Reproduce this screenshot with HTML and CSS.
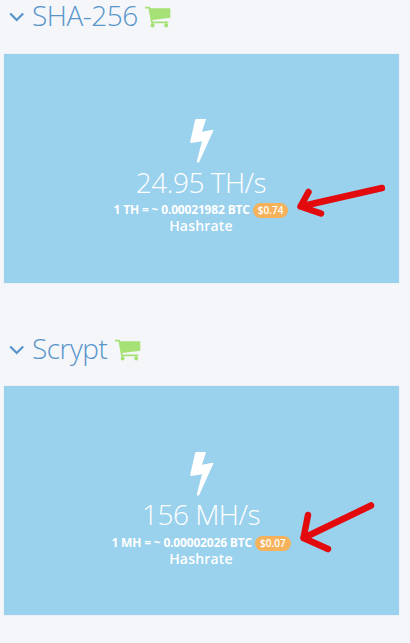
FILE: index.html
```html
<!DOCTYPE html>
<html lang="en">
<head>
<meta charset="utf-8">
<title>Hashrate</title>
<link rel="stylesheet" href="styles.css">
</head>
<body>
<svg class="defs" aria-hidden="true">
  <symbol id="chevron" viewBox="0 0 16 10"><path d="M1.200 1.500 7.700 8l6.500-6.500" fill="none" stroke="currentColor" stroke-width="2.200"/></symbol>
  <symbol id="cart" viewBox="0 0 26 22"><path d="M0 .8h4.700L5.300 2.300H25.300v9.500L7.300 14l.3 1.600H23.300v1.700H6.200L3.500 2.500H0z" fill="currentColor"/><circle cx="7.600" cy="19.500" r="2" fill="currentColor"/><circle cx="21.200" cy="19.500" r="2" fill="currentColor"/><path d="M7.600 16v3M21.200 16v3" stroke="currentColor" stroke-width="1.500"/></symbol>
  <symbol id="bolt" viewBox="0 0 24 44"><path d="M6.200 0H16.100L12 12.700l10.700-1.900q1 0 .5 1.300L9.300 42.800q-.7 1-1.700.8-1-.3-.8-1.300L12 22.200 1.200 24Q0 24 .2 22.700L5.100.9Q5.400 0 6.200 0z" fill="currentColor"/></symbol>
</svg>
<section class="pool">
  <h2 class="heading"><svg class="chevron"><use href="#chevron"/></svg><span>SHA-256</span><svg class="cart"><use href="#cart"/></svg></h2>
  <div class="card">
    <svg class="bolt"><use href="#bolt"/></svg>
    <div class="rate">24.95 TH/s</div>
    <div class="price"><span>1 TH = ~ 0.00021982 BTC</span><span class="badge">$0.74</span></div>
    <div class="label">Hashrate</div>
    <svg class="arrow arrow-sha" viewBox="0 0 100 60"><path d="M97 18 15.500 36.500M23.500 22 15.500 36.500 36 43.500"/></svg>
  </div>
</section>
<section class="pool pool-scrypt">
  <h2 class="heading"><svg class="chevron"><use href="#chevron"/></svg><span>Scrypt</span><svg class="cart"><use href="#cart"/></svg></h2>
  <div class="card">
    <svg class="bolt"><use href="#bolt"/></svg>
    <div class="rate">156 MH/s</div>
    <div class="price"><span>1 MH = ~ 0.00002026 BTC</span><span class="badge">$0.07</span></div>
    <div class="label">Hashrate</div>
    <svg class="arrow arrow-scrypt" viewBox="0 0 100 70"><path d="M86 15.500 18.500 48M23 25 18.500 48 43 59"/></svg>
  </div>
</section>
</body>
</html>
```

FILE: styles.css
```css
* { box-sizing: border-box; }
body {
  margin: 0;
  height: 643px;
  overflow: hidden;
  background: #f4f6fa;
  font-family: "Open Sans", sans-serif;
}
.defs { position: absolute; width: 0; height: 0; }
.pool { height: 333px; padding: 0 11px 0 4px; }
.heading {
  display: flex;
  align-items: flex-start;
  height: 54px;
  margin: 0;
  padding-left: 5px;
  color: #5794ca;
  font-size: 28px;
  font-weight: 300;
  line-height: 31px;
  letter-spacing: -.5px;
}
.chevron { width: 16px; height: 10px; margin: 12px 7px 0 0; }
.cart { width: 26px; height: 22px; margin: 6px 0 0 7px; color: #a5e174; }
.card {
  position: relative;
  display: flex;
  flex-direction: column;
  align-items: center;
  height: 229px;
  padding-top: 65px;
  background: #9ad1ed;
  box-shadow: 0 0 1px #cbd9e6;
  color: #fff;
}
.pool-scrypt .heading { height: 53px; }
.pool-scrypt .cart { margin-left: 8px; }
.pool-scrypt .card { padding-top: 66px; }
.bolt { width: 24px; height: 44px; }
.rate {
  height: 39px;
  margin-right: 1px;
  font-size: 28px;
  font-weight: 300;
  line-height: 38px;
  letter-spacing: -.5px;
}
.pool-scrypt .rate { line-height: 37px; }
.price {
  display: flex;
  align-items: center;
  gap: 3px;
  height: 15px;
  margin-right: 1px;
  font-size: 12px;
  font-weight: 700;
  line-height: 15px;
  letter-spacing: -.17px;
}
.badge {
  height: 15px;
  margin-top: 2px;
  padding: 0 5px;
  border-radius: 8px;
  background: #f6b25b;
  font-size: 10px;
  font-weight: 600;
  letter-spacing: 0;
}
.label {
  font-size: 14px;
  font-weight: 600;
  line-height: 18px;
  letter-spacing: .2px;
  margin-right: 1px;
}
.arrow {
  position: absolute;
  left: 281px;
  width: 100px;
  fill: none;
  stroke: #e20a0c;
  stroke-width: 6.500;
  stroke-linecap: round;
  stroke-linejoin: round;
}
.arrow-sha { top: 116px; height: 60px; }
.arrow-scrypt { top: 104px; height: 70px; }
```
